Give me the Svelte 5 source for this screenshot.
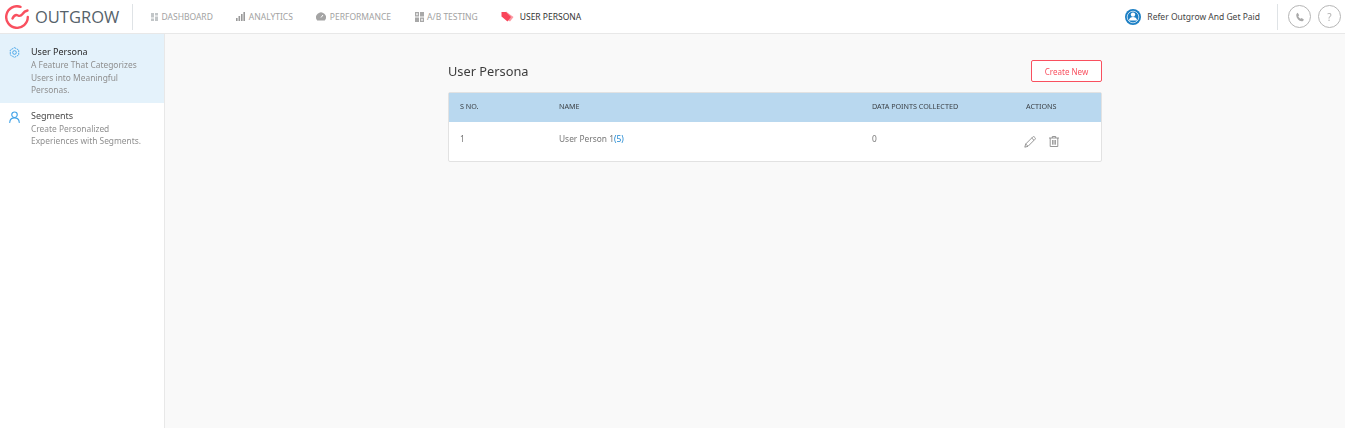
<script>
  const navItems = [
    { label: 'DASHBOARD', icon: 'dash' },
    { label: 'ANALYTICS', icon: 'bars' },
    { label: 'PERFORMANCE', icon: 'gauge' },
    { label: 'A/B TESTING', icon: 'ab' },
    { label: 'USER PERSONA', icon: 'tag', active: true }
  ];
</script>

<div class="page">
  <header class="topbar">
    <div class="logo">
      <svg width="24" height="24" viewBox="0 0 24 24" fill="none" stroke="#f9505f" stroke-width="2.4" stroke-linecap="round" stroke-linejoin="round">
        <path d="M15.5 1.800A10.800 10.800 0 1 0 22.800 12" />
        <path d="M7.500 13.500C9 10.500 11 9.500 13 10.500C15 11.500 16 11 17.500 9C18.500 7.500 20 6 22.500 5.500" />
      </svg>
      <span class="logo-text">OUTGROW</span>
    </div>
    <nav class="nav">
      {#each navItems as item}
        <div class="nav-item" class:active={item.active}>
          {#if item.icon === 'dash'}
            <svg width="7" height="8" viewBox="0 0 7 8" fill="#c2c6c8"><rect width="3" height="4.500"/><rect x="4" width="3" height="2.500"/><rect y="5.500" width="3" height="2.500"/><rect x="4" y="3.500" width="3" height="4.500"/></svg>
          {:else if item.icon === 'bars'}
            <svg width="9" height="9" viewBox="0 0 9 9" fill="#9a9a9a"><rect y="6" width="1.600" height="3"/><rect x="2.500" y="4" width="1.600" height="5"/><rect x="5" y="2" width="1.600" height="7"/><rect x="7.400" width="1.600" height="9"/></svg>
          {:else if item.icon === 'gauge'}
            <svg width="10" height="9" viewBox="0 0 10 9"><path d="M1.200 8.500A4.900 4.900 0 1 1 8.800 8.500Z" fill="#a4a4a4"/><path d="M5 5.500 7 3" stroke="#fff" stroke-width="1"/></svg>
          {:else if item.icon === 'ab'}
            <svg width="9" height="10" viewBox="0 0 9 10" fill="#a8a8a8"><rect width="4" height="4.500"/><rect x="5" width="4" height="4.500"/><rect y="5.500" width="4" height="4.500"/><rect x="5" y="5.500" width="4" height="4.500"/><rect x="1" y="1.200" width="2" height="2" fill="#e4e4e4"/><rect x="6" y="6.800" width="2" height="2" fill="#e4e4e4"/></svg>
          {:else}
            <svg width="13" height="11" viewBox="0 0 13 11"><path d="M5 .5 12.500 6 9 10.500 2 6Z" fill="#fb9aa3"/><path d="M.5 1H5L10 6 6.500 10.500.5 5.500Z" fill="#f9455a"/></svg>
          {/if}
          <span>{item.label}</span>
        </div>
      {/each}
    </nav>
    <div class="refer">
      <svg width="16" height="16" viewBox="0 0 16 16">
        <circle cx="8" cy="8" r="8" fill="#1c7fc4"/>
        <circle cx="8" cy="8" r="5.800" fill="none" stroke="#fff" stroke-width=".7"/>
        <circle cx="8" cy="5.600" r="2.200" fill="#fff"/>
        <path d="M3.800 11.500c.5-2.600 2.200-3.600 4.200-3.600s3.700 1 4.200 3.600Z" fill="#fff"/>
      </svg>
      <span>Refer Outgrow And Get Paid</span>
    </div>
    <div class="help">
      <div class="round">
        <svg width="10" height="10" viewBox="0 0 24 24" fill="#a9a9a9"><path d="M6.600 1.800 10 7.500 7.800 10c1 2.400 3 4.700 5.700 6.200l2.400-2 5.300 3.800c-.6 2.900-2.600 4.500-5 4.200C9 21.200 3.400 14.500 3 7.500 2.900 5 4.300 2.900 6.600 1.800Z"/></svg>
      </div>
      <div class="round">?</div>
    </div>
  </header>

  <div class="body">
    <aside class="sidebar">
      <div class="side-item selected">
        <svg class="side-icon" width="11" height="11" viewBox="0 0 12 12" fill="none" stroke="#3fa2e8" stroke-width="1">
          <path stroke-dasharray="2 .8" d="M6 .7 10.600 3.300V8.700L6 11.300 1.400 8.700V3.300Z"/>
          <circle cx="6" cy="6" r="2"/>
        </svg>
        <div>
          <h4>User Persona</h4>
          <p>A Feature That Categorizes Users into Meaningful Personas.</p>
        </div>
      </div>
      <div class="side-item second">
        <svg class="side-icon" width="11" height="12" viewBox="0 0 12 13" fill="none" stroke="#3fa2e8" stroke-width="1.200" stroke-linecap="round">
          <circle cx="6" cy="4" r="3"/>
          <path d="M.8 12.500C1 9.300 3 7.500 6 7.500s5 1.800 5.200 5"/>
        </svg>
        <div>
          <h4 class="dim">Segments</h4>
          <p>Create Personalized Experiences with Segments.</p>
        </div>
      </div>
    </aside>

    <main class="content">
      <div class="panel">
        <div class="title-row">
          <h2>User Persona</h2>
          <button class="create">Create New</button>
        </div>
        <table>
          <thead>
            <tr>
              <th class="c-sno">S NO.</th>
              <th class="c-name">NAME</th>
              <th class="c-data">DATA POINTS COLLECTED</th>
              <th>ACTIONS</th>
            </tr>
          </thead>
          <tbody>
            <tr>
              <td>1</td>
              <td>User Person 1<span class="count">(5)</span></td>
              <td>0</td>
              <td>
                <div class="actions">
                  <svg width="12" height="12" viewBox="0 0 12 12" fill="none" stroke="#8b8b8b" stroke-width=".9" stroke-linejoin="round"><path d="M.8 11.200 1.700 8 8.700 1a1.200 1.200 0 0 1 1.700 0l.6.600a1.200 1.200 0 0 1 0 1.700L4 10.300Z"/><path d="M7.700 2 10 4.300M1.700 8 4 10.300"/></svg>
                  <svg width="10" height="11" viewBox="0 0 10 11" fill="none" stroke="#8b8b8b" stroke-width=".9"><path d="M0 2h10M3.300 2V.5h3.400V2M1.200 2v8.500h7.600V2M3.600 4v4.700M5 4v4.700M6.400 4v4.700"/></svg>
                </div>
              </td>
            </tr>
          </tbody>
        </table>
      </div>
    </main>
  </div>
</div>

<style>
  :global(body) {
    margin: 0;
    background: #fff;
  }

  .page {
    display: flex;
    flex-direction: column;
    height: 428px;
    overflow: hidden;
    font-family: "Noto Sans", "Open Sans", sans-serif;
    color: #333;
    will-change: opacity;
  }

  .topbar {
    display: flex;
    align-items: center;
    height: 33px;
    flex: none;
    background: #fff;
    border-bottom: 1px solid #e8e8e8;
  }

  .logo {
    display: flex;
    align-items: center;
    gap: 6px;
    width: 133px;
    height: 26px;
    padding-left: 5px;
    box-sizing: border-box;
    border-right: 1px solid #dfe3e6;
    flex: none;
  }

  .logo-text {
    font-family: "Open Sans", sans-serif;
    font-size: 16.500px;
    font-weight: 500;
    color: #56626a;
  }

  .nav {
    display: flex;
    align-items: center;
    gap: 23.500px;
    padding-left: 18px;
    flex: 1;
  }

  .nav-item {
    display: flex;
    align-items: center;
    gap: 3.500px;
    font-size: 8.500px;
    color: #a2a2a2;
  }

  .nav-item.active {
    color: #333;
    gap: 5.500px;
  }

  .refer {
    display: flex;
    align-items: center;
    gap: 6px;
    font-size: 8.500px;
    color: #444;
    height: 26px;
    padding-right: 17px;
    border-right: 1px solid #dfe3e6;
  }

  .help {
    display: flex;
    gap: 7px;
    padding: 0 4px 0 10px;
  }

  .round {
    display: flex;
    align-items: center;
    justify-content: center;
    width: 23px;
    height: 23px;
    box-sizing: border-box;
    border: 1px solid #b5b5b5;
    border-radius: 50%;
    font-size: 10px;
    color: #b0b0b0;
  }

  .body {
    display: flex;
    flex: 1;
    min-height: 0;
  }

  .sidebar {
    width: 165px;
    flex: none;
    box-sizing: border-box;
    background: #fff;
    border-right: 1px solid #e8e8e8;
  }

  .side-item {
    display: flex;
    gap: 11px;
    padding: 11px 8px 0 9px;
  }

  .side-item.selected {
    height: 69px;
    box-sizing: border-box;
    background: #e4f2fb;
  }

  .side-item.second {
    padding-top: 5.500px;
  }

  .side-icon {
    flex: none;
    margin-top: 2px;
  }

  .side-item h4 {
    margin: 0 0 1px;
    font-size: 9px;
    line-height: 13px;
    font-weight: 400;
    color: #2c2c2c;
  }

  .side-item h4.dim {
    color: #4a4a4a;
  }

  .side-item p {
    margin: 0;
    font-size: 8.400px;
    line-height: 12.500px;
    color: #8f8f8f;
  }

  .content {
    flex: 1;
    background: #f9f9f9;
    padding: 26px 0 0 283px;
  }

  .panel {
    width: 654px;
  }

  .title-row {
    display: flex;
    align-items: center;
    justify-content: space-between;
    height: 22px;
    margin-bottom: 10px;
  }

  h2 {
    margin: 0;
    font-size: 12.800px;
    font-weight: 400;
    color: #3c3c3c;
  }

  .create {
    width: 71px;
    height: 22px;
    padding: 0;
    background: #fff;
    border: 1px solid #f9505f;
    border-radius: 2px;
    font: inherit;
    font-size: 8px;
    color: #f9505f;
  }

  table {
    width: 654px;
    border-collapse: separate;
    border-spacing: 0;
    table-layout: fixed;
    background: #fff;
    border: 1px solid #e2e2e2;
    border-radius: 2px;
  }

  th {
    height: 29px;
    padding: 0 0 3px 11px;
    box-sizing: border-box;
    background: #b9d8ef;
    font-size: 7.200px;
    font-weight: 400;
    text-align: left;
    color: #3a3f44;
  }

  .c-sno { width: 99px; }
  .c-name { width: 313px; }
  .c-data { width: 154px; }

  td {
    height: 39px;
    padding: 0 0 6px 11px;
    box-sizing: border-box;
    font-size: 8.400px;
    color: #777;
  }

  .count {
    color: #1c86d1;
  }

  .actions {
    display: flex;
    align-items: center;
    gap: 13px;
    margin: 6px 0 0 -2px;
  }
</style>
